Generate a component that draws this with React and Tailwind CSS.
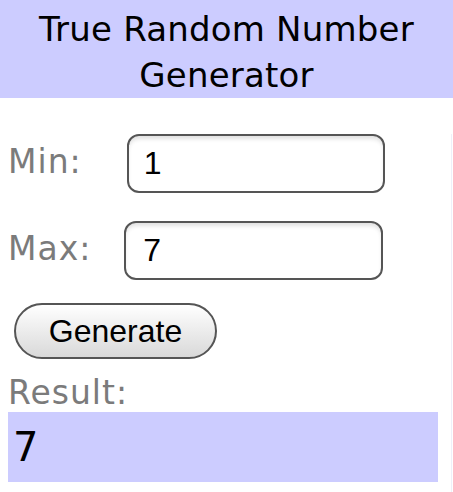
import { useState } from 'react'

export default function App() {
  const [min, setMin] = useState('1')
  const [max, setMax] = useState('7')
  const [result, setResult] = useState('7')

  const generate = () => {
    const lo = parseInt(min, 10)
    const hi = parseInt(max, 10)
    if (isNaN(lo) || isNaN(hi) || hi < lo) return
    setResult(String(lo + Math.floor(Math.random() * (hi - lo + 1))))
  }

  return (
    <div className="w-[453px] h-[492px] bg-white font-['DejaVu_Sans',sans-serif] overflow-hidden">
      {/* Title bar */}
      <div className="h-[98px] bg-[#ccccff] pt-[6px] text-center text-[34px] leading-[46px] tracking-[0.2px] text-black">
        True Random Number
        <br />
        Generator
      </div>

      <div className="border-r border-[#efeffa] w-[452px] h-[394px] pl-[8px]">
        {/* Min */}
        <div className="flex items-start mt-[36px]">
          <span className="mt-[9px] text-[33px] leading-[38px] tracking-[1px] text-[#7b7b7b]">Min:</span>
          <input
            value={min}
            onChange={(e) => setMin(e.target.value)}
            className="ml-[45px] w-[258px] h-[59px] rounded-[12px] border-2 border-[#555] bg-white pl-[15px] text-[32px] text-black font-['Liberation_Sans',Arial,sans-serif] shadow-[inset_0_4px_4px_-1px_rgba(0,0,0,0.12)] outline-none"
          />
        </div>

        {/* Max */}
        <div className="flex items-start mt-[28px]">
          <span className="mt-[9px] text-[33px] leading-[38px] tracking-[1px] text-[#7b7b7b]">Max:</span>
          <input
            value={max}
            onChange={(e) => setMax(e.target.value)}
            className="ml-[33px] w-[259px] h-[59px] rounded-[12px] border-2 border-[#555] bg-white pl-[17px] text-[32px] text-black font-['Liberation_Sans',Arial,sans-serif] shadow-[inset_0_4px_4px_-1px_rgba(0,0,0,0.12)] outline-none"
          />
        </div>

        <button
          onClick={generate}
          className="block mt-[23px] ml-[6px] w-[203px] h-[56px] rounded-full border-2 border-[#555] bg-gradient-to-b from-white to-[#d9d9d9] text-[32px] leading-none text-black font-['Liberation_Sans',Arial,sans-serif]"
        >
          Generate
        </button>

        <div className="mt-[15px] text-[33px] leading-[38px] tracking-[1px] text-[#7b7b7b]">Result:</div>
        <div className="w-[430px] h-[70px] bg-[#ccccff] pl-[5px] text-[40px] leading-[70px] text-black">
          {result}
        </div>
      </div>
    </div>
  )
}
